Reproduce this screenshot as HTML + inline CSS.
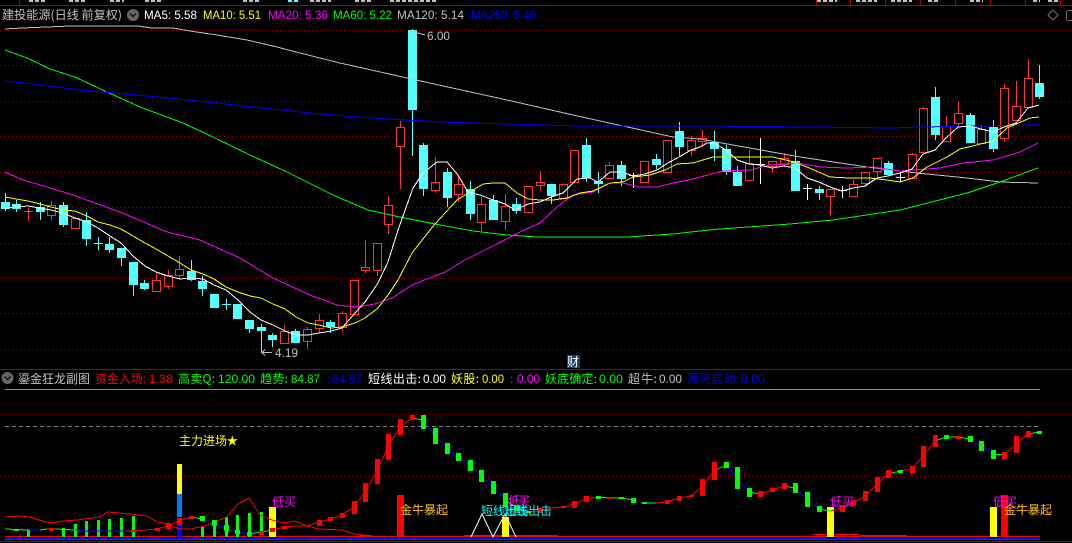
<!DOCTYPE html>
<html><head><meta charset="utf-8"><title>chart</title>
<style>
html,body{margin:0;padding:0;background:#000;width:1072px;height:543px;overflow:hidden}
svg{display:block;font-family:"Liberation Sans","WenQuanYi Zen Hei","Noto Sans CJK SC",sans-serif;font-size:12px}
.z{font-family:"WenQuanYi Zen Hei","Noto Sans CJK SC",sans-serif;font-size:12px}
.n{font-family:"Liberation Sans",sans-serif;font-size:12px}
</style></head><body>
<svg width="1072" height="543" viewBox="0 0 1072 543" xmlns="http://www.w3.org/2000/svg">
<rect width="1072" height="543" fill="#000"/>

<!-- top strip -->
<g shape-rendering="crispEdges">
<path d="M0 5.5H1072M19.5 0V5M816.5 0V5M850.5 0V5M885.5 0V5M920.5 0V5M955.5 0V5M990.5 0V5M1025.5 0V5M1060.5 0V5" stroke="#b00000" fill="none"/>
<path d="M29 1H47M69 1H86M110 1H124M145 1H162M243 1H260M310 1H331M355 1H372M390 1H438M817 1H837M856 1H877M891 1H912M928 1H940M970 1H983M1033 1H1040M1048 1H1058" stroke="#c0c0c0" stroke-width="2" stroke-dasharray="4 2" fill="none"/>
<path d="M288 1H300" stroke="#54ffff" stroke-width="2" stroke-dasharray="4 2" fill="none"/>
<!-- dotted grid upper -->
<path d="M0 30.5H1072M0 65.5H1072M0 101.5H1072M0 136.5H1072M0 172.5H1072M0 207.5H1072M0 243.5H1072M0 278.5H1072M0 313.5H1072M0 349.5H1072" stroke="#a00000" stroke-dasharray="1 3" fill="none"/>
<!-- separators -->
<path d="M0 369.5H1072" stroke="#a80000" fill="none"/>
<path d="M5 389.5H1040" stroke="#00e000" fill="none"/>
<path d="M0 414.5H1072M0 476.5H1072" stroke="#a00000" stroke-dasharray="1 3" fill="none"/>
<path d="M5 426.5H1040" stroke="#808080" stroke-dasharray="4 3" fill="none"/>
<path d="M0 541.5H1072" stroke="#a00000" fill="none"/>
</g>

<!-- header upper -->
<text x="2" y="19" class="z" fill="#c0c0c0" textLength="120" lengthAdjust="spacingAndGlyphs">建投能源(日线 前复权)</text>
<circle cx="133" cy="15" r="6" fill="#666"/>
<path d="M130 13.5l3 3 3-3" stroke="#111" stroke-width="1.4" fill="none"/>
<text x="144" y="19" class="n" fill="#ffffff" textLength="53" lengthAdjust="spacingAndGlyphs">MA5: 5.58</text>
<text x="203" y="19" class="n" fill="#ffff00" textLength="58" lengthAdjust="spacingAndGlyphs">MA10: 5.51</text>
<text x="268" y="19" class="n" fill="#ff00ff" textLength="60" lengthAdjust="spacingAndGlyphs">MA20: 5.36</text>
<text x="333" y="19" class="n" fill="#00ff00" textLength="59" lengthAdjust="spacingAndGlyphs">MA60: 5.22</text>
<text x="397" y="19" class="n" fill="#c0c0c0" textLength="67" lengthAdjust="spacingAndGlyphs">MA120: 5.14</text>
<text x="471" y="19" class="n" fill="#0000ff" textLength="65" lengthAdjust="spacingAndGlyphs">MA250: 5.46</text>
<path d="M1053 10l5 5-5 5-5-5z" stroke="#707070" fill="none"/>
<rect x="1066.5" y="10.5" width="10" height="10" rx="2" stroke="#707070" fill="none"/>

<!-- candles: red wicks -->
<g shape-rendering="crispEdges">
<path stroke="#ff3232" fill="none" d="M28.5 208V221M24 211.5H33M51.5 201V220M156.5 273V281M168.5 270V289M179.5 256V279M284.5 325V343M307.5 327V349M319.5 314V333M342.5 311V331M365.5 240V273M377.5 243V276M388.5 196V234M400.5 121V189M435.5 157V193M458.5 175V202M481.5 197V231M505.5 194V230M540.5 171V191M563.5 183V198M609.5 162V179M691.5 136V156M702.5 130V147M749.5 150V180M772.5 161V172M784.5 153V167M830.5 189V216M853.5 180V196M865.5 172V187M877.5 158V179M912.5 153V178M923.5 107V152M946.5 116V141M958.5 102V126M981.5 125V143M1004.5 84V142M1016.5 81V120M1028.5 59V107"/>
<!-- red bodies -->
<g fill="#000" stroke="#ff3232">
<rect x="47.5" y="205.5" width="8" height="10"/><rect x="71.5" y="218.5" width="8" height="10"/><rect x="152.5" y="280.5" width="8" height="11"/><rect x="164.5" y="275.5" width="8" height="11"/><rect x="175.5" y="269.5" width="8" height="6"/><rect x="280.5" y="331.5" width="8" height="12"/><rect x="303.5" y="329.5" width="8" height="12"/><rect x="315.5" y="320.5" width="8" height="8"/><rect x="338.5" y="313.5" width="8" height="14"/><rect x="350.5" y="280.5" width="8" height="34"/><rect x="361.5" y="267.5" width="8" height="3"/><rect x="373.5" y="243.5" width="8" height="27"/><rect x="384.5" y="205.5" width="8" height="19"/><rect x="396.5" y="127.5" width="8" height="19"/><rect x="431.5" y="182.5" width="8" height="8"/><rect x="454.5" y="184.5" width="8" height="10"/><rect x="477.5" y="204.5" width="8" height="18"/><rect x="501.5" y="206.5" width="8" height="15"/><rect x="524.5" y="186.5" width="8" height="26"/><rect x="536.5" y="182.5" width="8" height="3"/><rect x="559.5" y="184.5" width="8" height="14"/><rect x="570.5" y="150.5" width="8" height="32"/><rect x="605.5" y="165.5" width="8" height="13"/><rect x="640.5" y="161.5" width="8" height="21"/><rect x="663.5" y="140.5" width="8" height="32"/><rect x="687.5" y="140.5" width="8" height="10"/><rect x="698.5" y="138.5" width="8" height="3"/><rect x="745.5" y="163.5" width="8" height="17"/><rect x="768.5" y="161.5" width="8" height="5"/><rect x="780.5" y="158.5" width="8" height="6"/><rect x="826.5" y="189.5" width="8" height="7"/><rect x="849.5" y="184.5" width="8" height="12"/><rect x="861.5" y="172.5" width="8" height="11"/><rect x="873.5" y="158.5" width="8" height="13"/><rect x="908.5" y="154.5" width="8" height="24"/><rect x="919.5" y="108.5" width="8" height="44"/><rect x="942.5" y="126.5" width="8" height="15"/><rect x="954.5" y="113.5" width="8" height="10"/><rect x="977.5" y="129.5" width="8" height="14"/><rect x="1000.5" y="88.5" width="8" height="50"/><rect x="1012.5" y="106.5" width="8" height="14"/><rect x="1024.5" y="78.5" width="8" height="29"/>
</g>
<!-- cyan wicks -->
<path stroke="#54ffff" fill="none" d="M5.5 193V211M16.5 200V212M40.5 202V220M63.5 202V227M86.5 212V246M98.5 237V250M94 243.5H103M109.5 237V253M121.5 248V266M133.5 262V296M144.5 280V290M191.5 260V281M202.5 276V296M226.5 299V310M222 304.5H231M249.5 320V333M261.5 324V353M272.5 333V347M295.5 329V343M330.5 320V333M412.5 29V156M423.5 143V196M447.5 168V207M470.5 181V220M493.5 195V220M516.5 198V214M551.5 184V204M586.5 138V182M598.5 172V193M621.5 161V186M656.5 154V169M679.5 122V156M714.5 131V161M726.5 145V175M737.5 166V186M795.5 150V191M819.5 186V200M888.5 161V176M935.5 87V140M970.5 113V143M993.5 120V152M1039.5 65V99"/>
<!-- cyan bodies -->
<g fill="#54ffff">
<rect x="1" y="202" width="9" height="7"/><rect x="12" y="204" width="9" height="5"/><rect x="36" y="207" width="9" height="5"/><rect x="59" y="205" width="9" height="20"/><rect x="82" y="220" width="9" height="19"/><rect x="105" y="244" width="9" height="6"/><rect x="117" y="248" width="9" height="10"/><rect x="129" y="262" width="9" height="23"/><rect x="140" y="283" width="9" height="6"/><rect x="187" y="271" width="9" height="9"/><rect x="198" y="281" width="9" height="8"/><rect x="210" y="294" width="9" height="14"/><rect x="233" y="304" width="9" height="15"/><rect x="245" y="320" width="9" height="9"/><rect x="257" y="327" width="9" height="4"/><rect x="268" y="335" width="9" height="5"/><rect x="291" y="331" width="9" height="12"/><rect x="326" y="322" width="9" height="5"/><rect x="408" y="30" width="9" height="80"/><rect x="419" y="145" width="9" height="44"/><rect x="443" y="172" width="9" height="26"/><rect x="466" y="189" width="9" height="25"/><rect x="489" y="200" width="9" height="20"/><rect x="512" y="204" width="9" height="7"/><rect x="547" y="184" width="9" height="12"/><rect x="582" y="145" width="9" height="33"/><rect x="594" y="181" width="9" height="3"/><rect x="617" y="165" width="9" height="14"/><rect x="652" y="159" width="9" height="6"/><rect x="675" y="131" width="9" height="16"/><rect x="710" y="142" width="9" height="7"/><rect x="722" y="149" width="9" height="23"/><rect x="733" y="172" width="9" height="14"/><rect x="791" y="161" width="9" height="30"/><rect x="815" y="189" width="9" height="4"/><rect x="884" y="163" width="9" height="12"/><rect x="931" y="97" width="9" height="38"/><rect x="966" y="115" width="9" height="28"/><rect x="989" y="127" width="9" height="22"/><rect x="1035" y="83" width="9" height="14"/>
</g>
<!-- white crosses -->
<path stroke="#ffffff" fill="none" d="M633.5 173V188M629 175.5H638M760.5 138V184M756 164.5H765M807.5 184V200M803 188.5H812M842.5 186V198M838 190.5H847M900.5 172V182M896 177.5H905"/>
</g>

<!-- moving averages -->
<g fill="none" stroke-width="1" shape-rendering="crispEdges">
<polyline stroke="#c0c0c0" points="5,29 22,28 47,27 70,26 138,26 152,28 173,28 190,31 217,35 247,40 277,47 300,53 340,63 407,78 507,100 573,115 623,126 673,137 700,139 733,145 800,157 867,167 917,173 967,178 1000,182 1038,183"/>
<polyline stroke="#00ff00" points="5,50 27,58 50,69 75,77 107,92 140,107 183,123 213,137 250,155 287,172 313,185 333,195 368,210 400,217 440,225 473,231 507,235 537,237 627,237 673,234 700,231 720,229 790,224 833,220 900,210 967,193 1000,182 1038,168"/>
<polyline stroke="#0000ff" points="5,81 33,84 80,90 127,94 167,98 207,102 253,107 300,112 345,116 373,118 440,122 507,124 582,126 700,126 813,127 893,128 920,127 1039,125"/>
<polyline stroke="#ff00ff" points="5,172 23,180 37,184 73,195 120,212 167,232 200,240 240,258 273,278 310,295 337,305 355,307 375,304 392,298 412,285 445,272 465,260 495,245 522,231 540,223 557,207 573,195 593,192 610,183 623,183 640,187 657,187 673,183 693,179 723,171 750,170 770,165 797,163 820,167 847,168 873,167 900,171 940,168 963,163 993,160 1007,156 1020,152 1038,143"/>
<polyline stroke="#ffff00" points="5,197 16,199 28,201 40,204 51,207 63,210 75,211 87,216 98,222 110,225 121,229 133,236 145,243 156,249 168,256 180,263 191,270 203,274 214,279 226,287 238,292 250,296 261,298 273,304 285,309 296,317 308,323 319,325 331,328 342,327 355,323 365,318 378,308 388,295 398,280 412,253 430,230 435,224 457,200 470,192 483,184 493,183 505,183 517,193 528,199 540,200 553,200 567,198 580,193 593,191 610,183 623,182 633,177 650,175 665,170 677,164 693,163 713,157 740,157 773,157 790,161 807,167 830,177 850,178 870,178 887,180 900,182 913,178 927,167 947,157 960,149 993,141 1007,128 1030,118 1039,117"/>
<polyline stroke="#ffffff" points="5,208 16,207 28,206 51,210 63,213 75,218 87,222 98,228 110,236 121,243 133,256 145,266 156,272 168,276 180,279 191,278 203,279 214,285 226,290 238,300 250,312 261,320 273,325 285,331 296,335 308,335 319,333 331,331 342,328 355,313 365,302 378,283 388,262 398,230 413,188 423,173 437,162 447,162 458,175 468,192 480,195 493,200 505,204 515,210 528,204 540,202 551,197 563,193 577,179 590,178 598,182 610,172 622,172 633,176 645,174 657,170 668,163 679,157 691,150 700,147 707,143 714,143 726,150 737,160 749,164 760,165 772,168 784,166 795,168 807,178 819,182 830,187 842,191 853,188 865,186 877,178 888,176 900,173 912,169 923,154 935,150 946,138 958,127 970,126 981,129 993,132 1004,127 1016,123 1028,108 1039,105"/>
</g>

<!-- price labels -->
<path d="M414 32l3-2M414 32l3 2M414 32l11 3" stroke="#c0c0c0" fill="none"/>
<text x="427" y="40" class="n" fill="#c0c0c0" textLength="23" lengthAdjust="spacingAndGlyphs">6.00</text>
<path d="M262 352.5H272M262 352.5l3-3M262 352.5l3 3" stroke="#c0c0c0" fill="none"/>
<text x="275" y="357" class="n" fill="#c0c0c0" textLength="23" lengthAdjust="spacingAndGlyphs">4.19</text>
<rect x="567" y="355" width="13" height="13" fill="#15406e"/>
<text x="567" y="366" class="z" fill="#ffffff">财</text>

<!-- lower header -->
<circle cx="7.5" cy="378" r="6" fill="#666"/>
<path d="M4.5 376.5l3 3 3-3" stroke="#111" stroke-width="1.4" fill="none"/>
<text x="18" y="383" class="z" fill="#c0c0c0" textLength="72">鎏金狂龙副图</text>
<text x="95" y="383" class="z" fill="#ff0000" textLength="51">资金入场:</text>
<text x="149" y="383" class="n" fill="#ff0000" textLength="24" lengthAdjust="spacingAndGlyphs">1.38</text>
<text x="178" y="383" class="z" fill="#00ff00" textLength="37">高卖Q:</text>
<text x="218" y="383" class="n" fill="#00ff00" textLength="37" lengthAdjust="spacingAndGlyphs">120.00</text>
<text x="260" y="383" class="z" fill="#00ff00" textLength="28">趋势:</text>
<text x="291" y="383" class="n" fill="#00ff00" textLength="29" lengthAdjust="spacingAndGlyphs">84.87</text>
<text x="327" y="383" class="n" fill="#0000ff">:</text>
<text x="332" y="383" class="n" fill="#0000ff" textLength="30" lengthAdjust="spacingAndGlyphs">84.87</text>
<text x="368" y="383" class="z" fill="#ffffff" textLength="53">短线出击:</text>
<text x="423" y="383" class="n" fill="#ffffff" textLength="23" lengthAdjust="spacingAndGlyphs">0.00</text>
<text x="451" y="383" class="z" fill="#ffff00" textLength="28">妖股:</text>
<text x="482" y="383" class="n" fill="#ffff00" textLength="22" lengthAdjust="spacingAndGlyphs">0.00</text>
<text x="510" y="383" class="n" fill="#ff00ff">:</text>
<text x="517" y="383" class="n" fill="#ff00ff" textLength="23" lengthAdjust="spacingAndGlyphs">0.00</text>
<text x="545" y="383" class="z" fill="#00ff00" textLength="52">妖底确定:</text>
<text x="599" y="383" class="n" fill="#00ff00" textLength="24" lengthAdjust="spacingAndGlyphs">0.00</text>
<text x="628" y="383" class="z" fill="#c0c0c0" textLength="29">超牛:</text>
<text x="659" y="383" class="n" fill="#c0c0c0" textLength="23" lengthAdjust="spacingAndGlyphs">0.00</text>
<text x="687" y="383" class="z" fill="#0000ff" textLength="52">黑马启动:</text>
<text x="741" y="383" class="n" fill="#0000ff" textLength="24" lengthAdjust="spacingAndGlyphs">0.00</text>

<!-- lower panel -->
<g shape-rendering="crispEdges">
<!-- baseline stacks -->
<rect x="5" y="538" width="1035" height="1" fill="#0000ff"/>
<rect x="5" y="539" width="1035" height="1" fill="#6000ff"/>
<rect x="5" y="536" width="1035" height="1" fill="#ff0000"/>
<path d="M360 535.5H372M464 535.5H558M813 534.5H860M860 535.5H907" stroke="#ff0000" fill="none"/>
<!-- tall bars -->
<rect x="397" y="495" width="7" height="42" fill="#ff0000"/>
<rect x="1001" y="495" width="7" height="42" fill="#ff0000"/>
<rect x="269" y="507" width="7" height="30" fill="#ffff00"/>
<rect x="502" y="517" width="7" height="20" fill="#ffff00"/>
<rect x="827" y="507" width="7" height="30" fill="#ffff00"/>
<rect x="990" y="507" width="7" height="30" fill="#ffff00"/>
<rect x="177" y="464" width="5" height="30" fill="#ffff00"/>
<rect x="177" y="494" width="5" height="23" fill="#0078ff"/>
<rect x="177" y="525" width="5" height="12" fill="#0000ff"/>
<!-- thin green bars -->
<path fill="#00ff00" d="M27 529h3v8h-3zM62 528h3v9h-3zM74 524h3v13h-3zM85 521h3v16h-3zM97 520h3v17h-3zM108 519h3v18h-3zM120 518h3v19h-3zM132 516h3v21h-3zM201 526h3v11h-3zM213 520h3v17h-3zM225 517h3v20h-3zM236 515h3v22h-3zM248 513h3v24h-3zM260 512h3v21h-3z"/>
</g>
<!-- thin red line -->
<polyline fill="none" stroke="#ff0000" points="5,517 20,516 30,517 42,521 52,523 63,521 77,520 100,517 108,512 120,513 147,516 157,522 168,524 179,529 190,529 205,526 227,517 238,504 249,498 260,515 272,520 284,523 295,521 307,526 319,529 342,530 354,534 373,536" shape-rendering="crispEdges"/>
<!-- trend -->
<g fill="none" stroke-width="1" shape-rendering="crispEdges">
<path stroke="#ff0000" d="M47 529L55 529M123 531L133 531L157 529L168 526L179 521L191 517M272 530L284 527L296 526L307 526L319 522L331 519L342 515L354 507L365 492L377 471L388 447L400 427L412 418M528 512L540 511L552 508L563 507L574 504L586 499L598 497M656 503L667 502L679 498L691 496L702 487L714 471M760 494L772 490L784 486M831 511L842 508L853 503L865 496L877 484L888 474M900 471L912 469L923 456L935 441M1004 455L1016 444L1028 434"/>
<path stroke="#00ff00" d="M5 529L28 530M40 530L47 529M55 529L75 530M191 517L202 519M250 534L261 532L272 530M412 418L423 420M505 500L517 508L528 512M598 497L609 498L621 498L633 500M644 503L656 503M714 471L726 465M749 492L760 494M784 486L795 488M819 509L831 511M888 474L900 471M935 441L946 437L958 437L970 439M993 454L1004 455M1028 434L1039 432"/>
<path stroke="#0000ff" d="M28 530L40 530M75 530L87 531L123 531M202 519L214 523L226 528L238 532L250 534M423 420L435 436L447 448L458 457L470 465L481 476L493 487L505 500M633 500L644 503M726 465L737 478L749 492M795 488L807 499L819 509M970 439L981 446L993 454"/>
</g>
<!-- boxes -->
<g shape-rendering="crispEdges">
<path fill="#ff0000" d="M49 528h5v3h-5zM131 530h5v2h-5zM155 528h5v3h-5zM166 523h5v6h-5zM177 518h5v7h-5zM189 516h5v3h-5zM259 531h5v4h-5zM270 528h5v4h-5zM282 526h5v3h-5zM317 520h5v6h-5zM328 517h5v4h-5zM340 513h5v5h-5zM352 501h5v13h-5zM363 483h5v19h-5zM375 459h5v25h-5zM386 434h5v26h-5zM398 419h5v16h-5zM410 415h5v5h-5zM538 508h5v5h-5zM561 506h5v2h-5zM572 501h5v7h-5zM584 496h5v6h-5zM607 497h5v2h-5zM665 500h5v4h-5zM677 496h5v5h-5zM689 495h5v2h-5zM700 479h5v17h-5zM712 462h5v18h-5zM758 491h5v6h-5zM770 488h5v4h-5zM782 483h5v6h-5zM840 505h5v7h-5zM851 500h5v6h-5zM863 491h5v10h-5zM875 477h5v15h-5zM886 470h5v8h-5zM910 466h5v7h-5zM921 446h5v21h-5zM933 435h5v12h-5zM956 436h5v3h-5zM1002 452h5v7h-5zM1014 436h5v17h-5zM1026 431h5v6h-5z"/>
<path fill="#00ff00" d="M14 529h5v2h-5zM200 516h5v5h-5zM212 520h5v6h-5zM224 525h5v6h-5zM235 530h5v4h-5zM247 532h5v4h-5zM421 415h5v14h-5zM433 428h5v16h-5zM445 443h5v11h-5zM456 453h5v8h-5zM468 460h5v11h-5zM479 470h5v12h-5zM491 481h5v13h-5zM503 493h5v14h-5zM515 505h5v6h-5zM526 511h5v2h-5zM596 496h5v3h-5zM619 497h5v2h-5zM631 498h5v5h-5zM642 502h5v2h-5zM724 462h5v6h-5zM735 467h5v22h-5zM747 488h5v9h-5zM793 483h5v10h-5zM805 492h5v15h-5zM817 506h5v6h-5zM898 470h5v3h-5zM944 435h5v4h-5zM968 436h5v6h-5zM979 441h5v10h-5zM991 450h5v9h-5zM1037 431h5v3h-5z"/>
</g>
<!-- white triangles -->
<polyline fill="none" stroke="#ffffff" points="471,537 482,514 493,537 505,514 516,537"/>

<!-- lower labels -->
<text x="179" y="445" class="z" fill="#ffff00" textLength="48">主力进场</text>
<text x="226" y="445.5" style="font-family:'DejaVu Sans',sans-serif;font-size:14px" fill="#ffff00">★</text>
<text x="272" y="506" class="z" fill="#ff00ff" textLength="24">低买</text>
<text x="508" y="505" class="z" fill="#ff00ff" textLength="22">低买</text>
<text x="830" y="506" class="z" fill="#ff00ff" textLength="24">低买</text>
<text x="993" y="506" class="z" fill="#ff00ff" textLength="24">低买</text>
<text x="400" y="514" class="z" fill="#ffc000" textLength="48">金牛暴起</text>
<text x="1004" y="514" class="z" fill="#ffc000" textLength="48">金牛暴起</text>
<text x="481" y="515" class="z" fill="#00ffff" textLength="48">短线出击</text>
<text x="504" y="515" class="z" fill="#00ffff" textLength="48">短线出击</text>
</svg>
</body></html>
